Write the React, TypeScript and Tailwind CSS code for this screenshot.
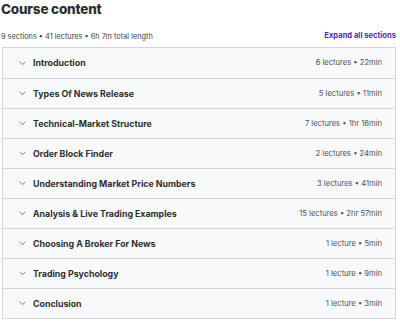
import React from "react";

const sections = [
  ["Introduction", "6 lectures • 22min"],
  ["Types Of News Release", "5 lectures • 11min"],
  ["Technical-Market Structure", "7 lectures • 1hr 16min"],
  ["Order Block Finder", "2 lectures • 24min"],
  ["Understanding Market Price Numbers", "3 lectures • 41min"],
  ["Analysis & Live Trading Examples", "15 lectures • 2hr 57min"],
  ["Choosing A Broker For News", "1 lecture • 5min"],
  ["Trading Psychology", "1 lecture • 9min"],
  ["Conclusion", "1 lecture • 3min"],
];

function Chevron() {
  return (
    <svg width="7" height="5" viewBox="0 0 7 5" fill="none" className="shrink-0">
      <path d="M1 1.2 L3.5 3.6 L6 1.2" stroke="#6a6f73" strokeWidth="0.9" strokeLinecap="round" strokeLinejoin="round" />
    </svg>
  );
}

export default function App() {
  return (
    <div className="w-[400px] h-[324px] bg-white overflow-hidden" style={{ fontFamily: "Inter, 'Noto Sans', sans-serif" }}>
      <div className="pl-[1px] pr-[4px]">
        <h2 className="text-[13.5px] leading-[18px] font-extrabold text-[#2d2f31] tracking-[-0.2px]">Course content</h2>
        <div className="flex items-center justify-between mt-[13px] h-[10px]">
          <span className="text-[7.35px] text-[#3e4143]">9 sections • 41 lectures • 6h 7m total length</span>
          <span className="text-[7.6px] font-bold text-[#5624d0]">Expand all sections</span>
        </div>
      </div>
      <div className="ml-[2px] mr-[4px] mt-[6px] border border-[#d1d7dc] bg-[#f7f9fa]">
        {sections.map(([t, m], i) => (
          <div key={i} className={"flex items-center h-[30px] pl-[16px] pr-[13px] " + (i > 0 ? "border-t border-[#d1d7dc]" : "")}>
            <Chevron />
            <span className="ml-[7px] text-[8.8px] font-bold text-[#2d2f31] flex-1">{t}</span>
            <span className="text-[7.6px] text-[#505457]">{m}</span>
          </div>
        ))}
      </div>
    </div>
  );
}
